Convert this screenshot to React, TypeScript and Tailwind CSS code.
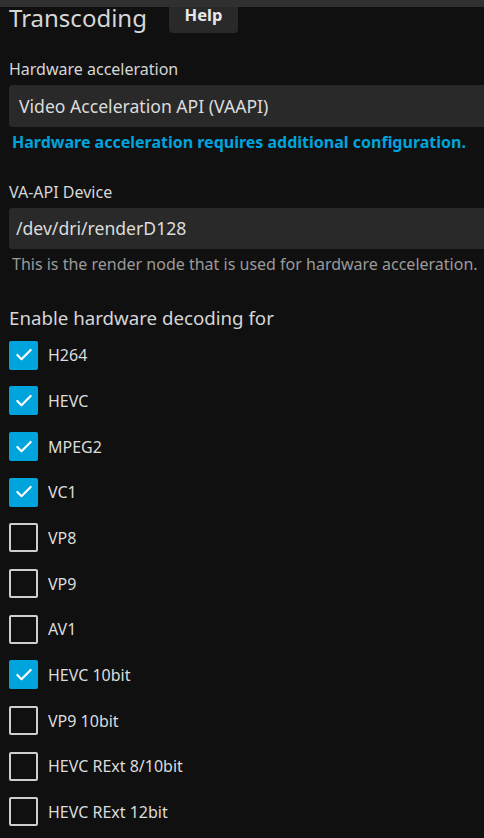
import { Check } from 'lucide-react'

const codecs: { name: string; checked: boolean }[] = [
  { name: 'H264', checked: true },
  { name: 'HEVC', checked: true },
  { name: 'MPEG2', checked: true },
  { name: 'VC1', checked: true },
  { name: 'VP8', checked: false },
  { name: 'VP9', checked: false },
  { name: 'AV1', checked: false },
  { name: 'HEVC 10bit', checked: true },
  { name: 'VP9 10bit', checked: false },
  { name: 'HEVC RExt 8/10bit', checked: false },
  { name: 'HEVC RExt 12bit', checked: false },
]

function CheckboxRow({ name, checked }: { name: string; checked: boolean }) {
  return (
    <label className="flex items-center h-[28.67px]">
      {checked ? (
        <span className="w-[29px] h-[29px] rounded-[2px] bg-[#00a4dc] flex items-center justify-center">
          <Check className="w-[20px] h-[20px] text-white" strokeWidth={2.6} />
        </span>
      ) : (
        <span className="w-[29px] h-[29px] rounded-[2px] border-2 border-[#cfcfcf]" />
      )}
      <span className="ml-[10px] text-[16px] text-[#dcdcdc]">{name}</span>
    </label>
  )
}

export default function App() {
  return (
    <div
      className="relative w-[484px] h-[838px] overflow-hidden bg-[#101010] text-[#dcdcdc]"
      style={{ fontFamily: '"Noto Sans", "DejaVu Sans", sans-serif' }}
    >
      {/* header bar lies over the page */}
      <div className="absolute top-0 left-0 right-0 h-[7px] bg-[#303030] z-10" />

      <div className="pl-[9px] w-[520px]">
        <div className="flex items-end h-[33px]">
          <h2 className="text-[24px] leading-[30px] text-[#d6d6d6]">Transcoding</h2>
          <button className="ml-[22px] w-[69px] h-[40px] rounded-[4px] bg-[#292929] text-[16.5px] font-bold text-[#e8e8e8] pt-[5px]">
            Help
          </button>
        </div>

        <div className="mt-[25px]">
          <div className="text-[16px] leading-[22px] text-[#d6d6d6]">Hardware acceleration</div>
          <div className="mt-[5px] h-[42px] rounded-[3px] bg-[#292929] flex items-center pl-[10px] text-[17.6px]">
            Video Acceleration API (VAAPI)
          </div>
          <div className="mt-[5px] pl-[3px] text-[16px] leading-[20px] font-bold text-[#00a4dc]">
            Hardware acceleration requires additional configuration.
          </div>
        </div>

        <div className="mt-[29px]">
          <div className="text-[16px] leading-[22px] text-[#d6d6d6]">VA-API Device</div>
          <div className="mt-[5px] h-[41px] rounded-[3px] bg-[#292929] flex items-center pl-[7px] text-[17.6px]">
            /dev/dri/renderD128
          </div>
          <div className="mt-[5px] pl-[3px] text-[16px] leading-[20px] text-[#9a9a9a]">
            This is the render node that is used for hardware acceleration.
          </div>
        </div>

        <div className="mt-[32px]">
          <div className="text-[18.7px] leading-[24px] text-[#d6d6d6]">Enable hardware decoding for</div>
          <div className="mt-[11px] flex flex-col gap-[17px]">
            {codecs.map((c) => (
              <CheckboxRow key={c.name} name={c.name} checked={c.checked} />
            ))}
          </div>
        </div>
      </div>
    </div>
  )
}
